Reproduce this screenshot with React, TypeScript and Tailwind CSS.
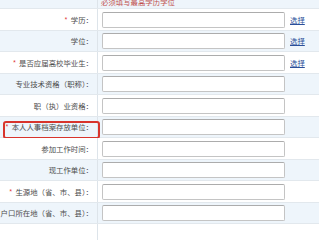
const rows: { label: string; required?: boolean; pick?: boolean; h: number }[] = [
  { label: "学历：", required: true, pick: true, h: 22 },
  { label: "学位：", pick: true, h: 21 },
  { label: "是否应届高校毕业生：", required: true, pick: true, h: 22 },
  { label: "专业技术资格（职称）：", h: 21 },
  { label: "职（执）业资格：", h: 22 },
  { label: "本人人事档案存放单位：", required: true, h: 21 },
  { label: "参加工作时间：", h: 22 },
  { label: "现工作单位：", h: 21 },
  { label: "生源地（省、市、县）：", required: true, h: 22 },
  { label: "户口所在地（省、市、县）：", h: 21 },
];

export default function App() {
  return (
    <div
      className="w-[319px] h-[240px] overflow-hidden bg-white text-[7.4px] leading-none text-[#4d4d4d]"
      style={{ fontFamily: '"Noto Sans CJK SC", "Noto Sans", sans-serif' }}
    >
      {/* 顶部提示 */}
      <div className="flex h-[9px] bg-[#eef5fb] border-b border-[#e2e8ed]">
        <div className="w-[98px] border-r border-[#dde4ea]" />
        <div className="pl-[3px] -mt-[2px] text-[#c0504d]">必须填写最高学历学位</div>
      </div>

      {rows.map((row, i) => (
        <div
          key={i}
          className={`relative flex border-b border-[#e2e8ed] ${
            i % 2 === 1 ? "bg-[#eef5fb]" : "bg-white"
          }`}
          style={{ height: row.h }}
        >
          <div className="w-[98px] shrink-0 border-r border-[#dde4ea] flex items-center justify-end pr-[4px] overflow-hidden whitespace-nowrap">
            {row.required && <span className="text-[#e23b3b] mr-[3px]">*</span>}
            <span>{row.label}</span>
          </div>
          <div className="flex items-center pl-[4px]">
            <input
              type="text"
              className="w-[183px] h-[16px] bg-white border border-[#c4c4c4] border-t-[#acacac] rounded-[2px] outline-none"
            />
            {row.pick && (
              <a className="ml-[5px] text-[#2a4f9a] underline cursor-pointer">选择</a>
            )}
          </div>
          {i === 5 && (
            <div className="absolute left-[3px] top-[4px] w-[97px] h-[18px] border-2 border-[#d8342c] rounded-[3px]" />
          )}
        </div>
      ))}

      <div className="flex h-[30px] bg-white">
        <div className="w-[98px] border-r border-[#dde4ea]" />
      </div>
    </div>
  );
}
